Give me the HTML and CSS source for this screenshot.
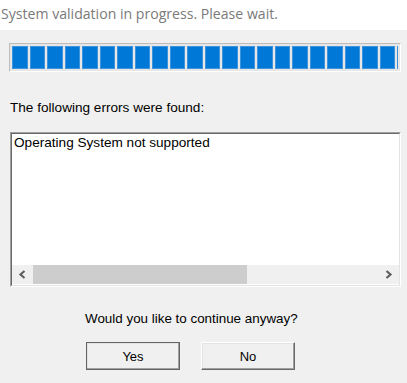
FILE: index.html
```html
<!DOCTYPE html>
<html lang="en">
<head>
    <meta charset="UTF-8">
    <title>System validation</title>
    <link rel="stylesheet" href="styles.css">
</head>
<body>
    <div class="header">System validation in progress. Please wait.</div>

    <div class="content">
        <div class="progress">
            <div class="progress-inner">
                <span class="seg"></span><span class="seg"></span><span class="seg"></span><span class="seg"></span>
                <span class="seg"></span><span class="seg"></span><span class="seg"></span><span class="seg"></span>
                <span class="seg"></span><span class="seg"></span><span class="seg"></span><span class="seg"></span>
                <span class="seg"></span><span class="seg"></span><span class="seg"></span><span class="seg"></span>
                <span class="seg"></span><span class="seg"></span><span class="seg"></span><span class="seg"></span>
                <span class="seg"></span><span class="seg"></span><span class="seg"></span>
            </div>
        </div>

        <p class="label">The following errors were found:</p>

        <div class="errors">
            <div class="errors-inner">
                <div class="errors-text">Operating System not supported</div>
                <div class="hscroll">
                    <span class="arrow">
                        <svg width="9" height="9" viewBox="0 0 9 9"><path d="M6.5 1 L2.5 4.5 L6.5 8" fill="none" stroke="#606060" stroke-width="2.2"/></svg>
                    </span>
                    <div class="track"><div class="thumb"></div></div>
                    <span class="arrow">
                        <svg width="9" height="9" viewBox="0 0 9 9"><path d="M2.5 1 L6.5 4.5 L2.5 8" fill="none" stroke="#606060" stroke-width="2.2"/></svg>
                    </span>
                </div>
            </div>
        </div>

        <p class="question">Would you like to continue anyway?</p>

        <div class="buttons">
            <button class="btn btn-default">Yes</button>
            <button class="btn">No</button>
        </div>
    </div>
</body>
</html>
```

FILE: styles.css
```css
body {
    margin: 0;
    background-color: #f0f0f0;
    font-family: "Liberation Sans", Arial, sans-serif;
    font-size: 12px;
    color: #000;
}
.header {
    background-color: #fff;
    height: 30px;
    line-height: 28px;
    padding-left: 1px;
    font-family: "Open Sans", "Noto Sans", sans-serif;
    font-size: 14.1px;
    color: #7a7a7a;
    white-space: nowrap;
}
.content {
    padding: 13px 6px 0 9px;
}
.progress {
    height: 27px;
    border: 1px solid;
    border-color: #bcbcbc #fff #fff #bcbcbc;
    background-color: #e6e6e6;
}
.progress-inner {
    display: flex;
    gap: 2px;
    height: 23px;
    margin: 2px 2px 0 2px;
    overflow: hidden;
}
.seg {
    flex: 0 0 15.5px;
    box-sizing: border-box;
    background-color: #0078d7;
    border: 1px solid #3d94dc;
}
.label {
    margin: 28px 0 0 1px;
    height: 32px;
    font-size: 13.6px;
}
.errors {
    height: 153px;
    border: 1px solid;
    border-color: #a0a0a0 #fff #fff #a0a0a0;
    width: 389px;
    margin-left: 1px;
}
.errors-inner {
    height: 151px;
    border: 1px solid;
    border-color: #696969 #e3e3e3 #e3e3e3 #696969;
    background-color: #fff;
    display: flex;
    flex-direction: column;
}
.errors-text {
    flex: 1;
    padding: 1px 0 0 2px;
    font-size: 13.6px;
}
.hscroll {
    display: flex;
    height: 19px;
    margin-bottom: 1px;
    background-color: #f0f0f0;
}
.arrow {
    width: 21px;
    display: flex;
    align-items: center;
    justify-content: center;
}
.track {
    flex: 1;
    display: flex;
    align-items: stretch;
}
.thumb {
    width: 214px;
    background-color: #cdcdcd;
}
.question {
    margin: 24px 0 0 76px;
    font-size: 13.4px;
}
.buttons {
    display: flex;
    gap: 21px;
    margin: 16px 0 0 77px;
}
.btn {
    width: 94px;
    height: 28px;
    font-family: "Liberation Sans", Arial, sans-serif;
    font-size: 13px;
    color: #000;
    background-color: #f0f0f0;
    border: 1px solid;
    border-color: #fff #696969 #696969 #fff;
    box-shadow: inset -1px -1px 0 #a0a0a0, inset 1px 1px 0 #e3e3e3;
    padding: 0;
}
.btn-default {
    outline: 1px solid #646464;
    outline-offset: -1px;
}
```
